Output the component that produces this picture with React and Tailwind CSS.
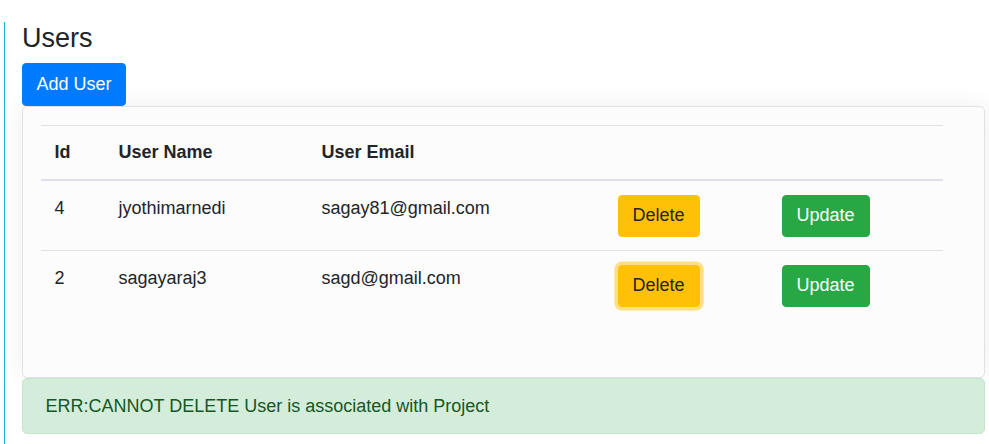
export default function App() {
  const rows = [
    { id: 4, name: "jyothimarnedi", email: "sagay81@gmail.com", focus: false },
    { id: 2, name: "sagayaraj3", email: "sagd@gmail.com", focus: true },
  ];
  return (
    <div className="min-h-[444px] w-[989px] bg-white font-['Liberation_Sans',Arial,sans-serif] text-[18px] leading-[27px] text-[#212529]">
      <div className="pl-[4px] pt-[22px] pr-[4px]">
        <div className="min-h-[422px] border-l border-[#19b5d4] pl-[17px]">
          <h4 className="mb-[9px] text-[27px] leading-[32.4px] font-normal">Users</h4>
          <button className="h-[43px] rounded-[4px] border border-[#007bff] bg-[#007bff] px-[13.5px] text-[18px] leading-[27px] text-white">
            Add User
          </button>
          <div className="rounded-[5px] border border-[#dfe3e7] bg-[#fcfcfc] px-[18px] pt-[18px] pb-[57px] shadow-[0_0_24px_rgba(0,0,0,0.07)]">
            <table className="w-[902px] table-fixed">
              <colgroup>
                <col className="w-[64px]" />
                <col className="w-[203px]" />
                <col className="w-[296px]" />
                <col className="w-[164px]" />
                <col className="w-[175px]" />
              </colgroup>
              <thead>
                <tr>
                  <th className="border-t border-b-2 border-[#dee2e6] px-[13.5px] py-[13px] text-left font-bold">Id</th>
                  <th className="border-t border-b-2 border-[#dee2e6] px-[13.5px] py-[13px] text-left font-bold">User Name</th>
                  <th className="border-t border-b-2 border-[#dee2e6] px-[13.5px] py-[13px] text-left font-bold">User Email</th>
                  <th className="border-t border-b-2 border-[#dee2e6] px-[13.5px] py-[13px]"></th>
                  <th className="border-t border-b-2 border-[#dee2e6] px-[13.5px] py-[13px]"></th>
                </tr>
              </thead>
              <tbody>
                {rows.map((r, i) => (
                  <tr key={r.id}>
                    <td className={`${i === 0 ? "" : "border-t border-[#dee2e6]"} px-[13.5px] py-[13.5px] align-top`}>{r.id}</td>
                    <td className={`${i === 0 ? "" : "border-t border-[#dee2e6]"} px-[13.5px] py-[13.5px] align-top`}>{r.name}</td>
                    <td className={`${i === 0 ? "" : "border-t border-[#dee2e6]"} px-[13.5px] py-[13.5px] align-top`}>{r.email}</td>
                    <td className={`${i === 0 ? "" : "border-t border-[#dee2e6]"} px-[13.5px] py-[13.5px] align-top`}>
                      <button
                        className={`h-[42px] rounded-[4px] border border-[#ffc107] bg-[#ffc107] px-[14px] text-[18px] leading-[27px] text-[#212529] ${
                          r.focus ? "shadow-[0_0_0_3.6px_rgba(255,193,7,0.5)]" : ""
                        }`}
                      >
                        Delete
                      </button>
                    </td>
                    <td className={`${i === 0 ? "" : "border-t border-[#dee2e6]"} px-[13.5px] py-[13.5px] align-top`}>
                      <button className="h-[42px] rounded-[4px] border border-[#28a745] bg-[#28a745] px-[14px] text-[18px] leading-[27px] text-white">
                        Update
                      </button>
                    </td>
                  </tr>
                ))}
              </tbody>
            </table>
          </div>
          <div className="rounded-[5px] border border-[#c3e6cb] bg-[#d4edda] px-[22.5px] py-[13.5px] text-[#155724]">
            ERR:CANNOT DELETE User is associated with Project
          </div>
        </div>
      </div>
    </div>
  );
}
